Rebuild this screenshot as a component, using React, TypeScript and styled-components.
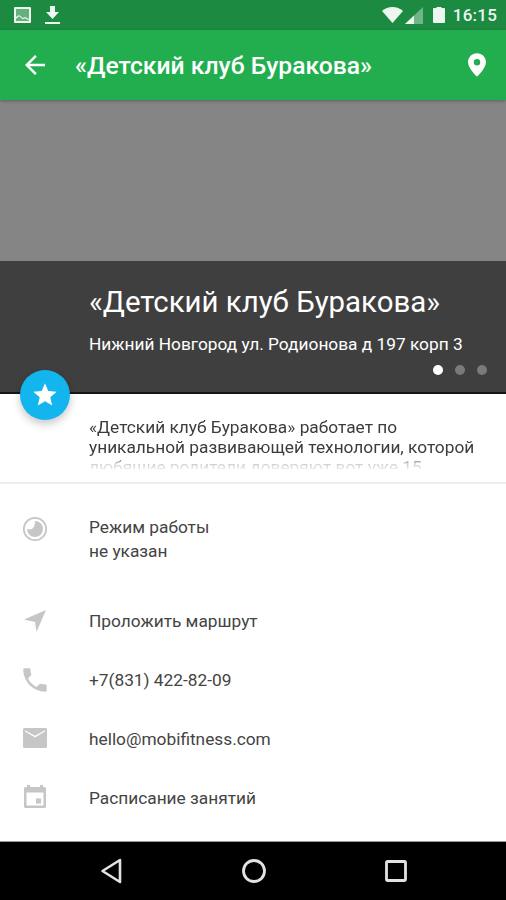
import React from "react";
import styled, { createGlobalStyle } from "styled-components";

const GlobalStyle = createGlobalStyle`
  html, body {
    margin: 0;
    padding: 0;
    background: #fff;
  }
  * {
    box-sizing: border-box;
  }
`;

const Screen = styled.div`
  position: relative;
  display: flex;
  flex-direction: column;
  width: 506px;
  height: 900px;
  overflow: hidden;
  background: #fff;
  font-family: Roboto, "Noto Sans", sans-serif;
  color: #3c3c3c;
`;

const StatusBar = styled.div`
  display: flex;
  align-items: center;
  justify-content: space-between;
  flex: none;
  height: 30px;
  padding: 0 9px 0 14px;
  background: #1c8a41;
  color: #eef6f0;
`;

const StatusGroup = styled.div<{ $gap: number }>`
  display: flex;
  align-items: center;
  gap: ${(p) => p.$gap}px;
`;

const Clock = styled.span`
  font-size: 17px;
  font-weight: 500;
  letter-spacing: 0.2px;
`;

const Toolbar = styled.header`
  display: flex;
  align-items: center;
  flex: none;
  height: 70px;
  padding: 0 20px 0 25px;
  background: #22ae4f;
  color: #fff;
  box-shadow: 0 1px 3px rgba(0, 0, 0, 0.3);
  z-index: 1;
`;

const ToolbarTitle = styled.h1`
  flex: 1;
  margin: 0 0 0 30px;
  font-size: 24.7px;
  font-weight: 500;
  white-space: nowrap;
`;

const Photo = styled.div`
  flex: none;
  height: 161px;
  background: #858585;
`;

const Hero = styled.section`
  position: relative;
  flex: none;
  height: 133px;
  padding: 25px 0 0 89px;
  background: #3f3f3f;
  border-bottom: 2px solid #161616;
  color: #fff;
`;

const HeroTitle = styled.h2`
  margin: 0;
  font-size: 29.4px;
  font-weight: 400;
  line-height: 33px;
  white-space: nowrap;
`;

const HeroAddress = styled.p`
  margin: 15px 0 0;
  font-size: 17.3px;
  line-height: 20px;
  white-space: nowrap;
`;

const Dots = styled.div`
  position: absolute;
  right: 19px;
  top: 104px;
  display: flex;
  align-items: center;
  gap: 12px;
`;

const Dot = styled.span<{ $active?: boolean }>`
  width: 10px;
  height: 10px;
  border-radius: 50%;
  background: ${(p) => (p.$active ? "#fff" : "#7a7a7a")};
`;

const Fab = styled.div`
  position: absolute;
  left: 20px;
  top: 370px;
  display: flex;
  align-items: center;
  justify-content: center;
  width: 50px;
  height: 50px;
  border-radius: 50%;
  background: #12b5ee;
  box-shadow: 0 4px 8px rgba(0, 0, 0, 0.22);
  z-index: 2;
`;

const Description = styled.div`
  flex: none;
  height: 90px;
  padding: 23px 20px 0 89px;
  border-bottom: 2px solid #ececec;
`;

const DescriptionText = styled.p`
  height: 52px;
  margin: 0;
  overflow: hidden;
  font-size: 17.3px;
  line-height: 20px;
  color: #3c3c3c;
  white-space: nowrap;
  -webkit-mask-image: linear-gradient(to bottom, #000 72%, rgba(0, 0, 0, 0.25) 90%, rgba(0, 0, 0, 0.1) 100%);
  mask-image: linear-gradient(to bottom, #000 72%, rgba(0, 0, 0, 0.25) 90%, rgba(0, 0, 0, 0.1) 100%);
`;

const List = styled.ul`
  flex: 1;
  margin: 0;
  padding: 31px 0 0;
  list-style: none;
`;

const Row = styled.li<{ $height: number }>`
  display: flex;
  align-items: flex-start;
  height: ${(p) => p.$height}px;
  padding-left: 22px;
`;

const RowIcon = styled.span<{ $top?: number }>`
  display: flex;
  flex: none;
  width: 26px;
  height: 26px;
  margin-top: ${(p) => p.$top ?? -1}px;
  margin-right: 41px;
  color: #c6c6c6;
`;

const RowText = styled.span`
  font-size: 17.3px;
  line-height: 24px;
  color: #444;
  white-space: pre-line;
`;

const NavBar = styled.nav`
  display: flex;
  align-items: center;
  justify-content: space-between;
  flex: none;
  height: 59px;
  padding: 0 98px 0 99px;
  background: #000;
  border-top: 1px solid #999;
  color: #e2e2e2;
`;

const Star = () => (
  <svg width="28" height="28" viewBox="0 0 24 24" fill="#fff">
    <path d="M12 17.27 18.18 21l-1.64-7.03L22 9.24l-7.19-.61L12 2 9.19 8.63 2 9.24l5.46 4.73L5.82 21z" />
  </svg>
);

const ClockIcon = () => (
  <svg width="26" height="26" viewBox="0 0 26 26">
    <circle cx="13" cy="13" r="11.2" fill="none" stroke="currentColor" strokeWidth="1.8" />
    <path d="M13 5a8 8 0 1 1-8 8c3 1 8 1 8-8z" fill="currentColor" />
  </svg>
);

const App: React.FC = () => (
  <Screen>
    <GlobalStyle />
    <StatusBar>
      <StatusGroup $gap={14}>
        <svg width="17" height="16" viewBox="0 0 17 16" fill="currentColor">
          <rect x="1" y="1" width="15" height="14" opacity="0.35" />
          <path d="M1 0h15a1 1 0 0 1 1 1v14a1 1 0 0 1-1 1H1a1 1 0 0 1-1-1V1a1 1 0 0 1 1-1zm1 2v8l3-2 4 3 2-1 4 2V2zm0 10v2h13v-.8l-4-2-2 1-4-3z" fillRule="evenodd" />
        </svg>
        <svg width="15" height="18" viewBox="0 0 15 18" fill="currentColor">
          <path d="M5 0h5v6h4l-6.500 7L1 6h4zM0 16h15v2H0z" />
        </svg>
      </StatusGroup>
      <StatusGroup $gap={8}>
        <StatusGroup $gap={2}>
          <svg width="21" height="16" viewBox="0 0 21 16" fill="currentColor">
            <path d="M10.500 16 0 4C3 1.500 6.500 0 10.500 0S18 1.500 21 4z" />
          </svg>
          <svg width="18" height="17" viewBox="0 0 18 17">
            <path d="M0 17 18 0v17z" fill="currentColor" opacity="0.4" />
            <path d="M0 17l9-8.500V17z" fill="currentColor" />
          </svg>
        </StatusGroup>
        <svg width="12" height="16" viewBox="0 0 12 16" fill="currentColor" style={{ marginLeft: 2 }}>
          <path d="M3.500 0h5v1H11a1 1 0 0 1 1 1v13a1 1 0 0 1-1 1H1a1 1 0 0 1-1-1V2a1 1 0 0 1 1-1h2.500z" />
        </svg>
        <Clock>16:15</Clock>
      </StatusGroup>
    </StatusBar>

    <Toolbar>
      <svg width="20" height="20" viewBox="0 0 24 24" fill="currentColor">
        <path d="M24 10.500H5.700l8.400-8.400L12 0 0 12l12 12 2.100-2.100-8.400-8.400H24z" />
      </svg>
      <ToolbarTitle>«Детский клуб Буракова»</ToolbarTitle>
      <svg width="18" height="24" viewBox="0 0 20 26" fill="currentColor">
        <path d="M10 0C4.500 0 0 4.400 0 9.800 0 17 10 26 10 26s10-9 10-16.200C20 4.400 15.500 0 10 0zm0 13.500a3.600 3.600 0 1 1 0-7.200 3.600 3.600 0 0 1 0 7.200z" />
      </svg>
    </Toolbar>

    <Photo />

    <Hero>
      <HeroTitle>«Детский клуб Буракова»</HeroTitle>
      <HeroAddress>Нижний Новгород ул. Родионова д 197 корп 3</HeroAddress>
      <Dots>
        <Dot $active />
        <Dot />
        <Dot />
      </Dots>
    </Hero>

    <Fab>
      <Star />
    </Fab>

    <Description>
      <DescriptionText>
        «Детский клуб Буракова» работает по
        <br />
        уникальной развивающей технологии, которой
        <br />
        любящие родители доверяют вот уже 15
      </DescriptionText>
    </Description>

    <List>
      <Row $height={94}>
        <RowIcon $top={1}>
          <ClockIcon />
        </RowIcon>
        <RowText>{"Режим работы\nне указан"}</RowText>
      </Row>
      <Row $height={59}>
        <RowIcon>
          <svg width="26" height="26" viewBox="0 0 26 26" fill="currentColor">
            <path d="M24 2 2 11.500l11 2.500 1.500 10z" />
          </svg>
        </RowIcon>
        <RowText>Проложить маршрут</RowText>
      </Row>
      <Row $height={59}>
        <RowIcon>
          <svg width="26" height="26" viewBox="2 2 20 20" fill="currentColor">
            <path d="M6.620 10.790c1.440 2.830 3.760 5.140 6.590 6.590l2.200-2.200c.27-.27.67-.36 1.020-.24 1.120.37 2.330.57 3.570.57.550 0 1 .45 1 1V20c0 .55-.45 1-1 1C10.610 21 3 13.390 3 4c0-.55.450-1 1-1h3.500c.55 0 1 .45 1 1 0 1.250.2 2.450.57 3.570.11.350.03.740-.25 1.020l-2.200 2.200z" />
          </svg>
        </RowIcon>
        <RowText>+7(831) 422-82-09</RowText>
      </Row>
      <Row $height={59}>
        <RowIcon>
          <svg width="26" height="26" viewBox="0 0 26 26" fill="currentColor">
            <path d="M2.500 2h21A1.500 1.500 0 0 1 25 3.500v17a1.500 1.500 0 0 1-1.500 1.500h-21A1.500 1.500 0 0 1 1 20.500v-17A1.500 1.500 0 0 1 2.500 2zm.500 3.500 10 6 10-6V4.200l-10 5.600L3 4.200z" fillRule="evenodd" />
          </svg>
        </RowIcon>
        <RowText>hello@mobifitness.com</RowText>
      </Row>
      <Row $height={40}>
        <RowIcon>
          <svg width="26" height="26" viewBox="0 0 26 26" fill="currentColor">
            <path d="M5 0h3v2h10V0h3v2h1.500A1.500 1.500 0 0 1 24 3.500v18a1.500 1.500 0 0 1-1.500 1.500h-19A1.500 1.500 0 0 1 2 21.500v-18A1.500 1.500 0 0 1 3.500 2H5zM4.500 7.500v13h17v-13zM14 13.500h5v5h-5z" fillRule="evenodd" />
          </svg>
        </RowIcon>
        <RowText>Расписание занятий</RowText>
      </Row>
    </List>

    <NavBar>
      <svg width="24" height="26" viewBox="0 0 24 26" fill="none" stroke="currentColor" strokeWidth="2.600" strokeLinejoin="round">
        <path d="M21 2 3.500 13 21 24z" />
      </svg>
      <svg width="26" height="26" viewBox="0 0 26 26" fill="none" stroke="currentColor" strokeWidth="2.800">
        <circle cx="13" cy="13" r="10.500" />
      </svg>
      <svg width="24" height="24" viewBox="0 0 24 24" fill="none" stroke="currentColor" strokeWidth="2.800" strokeLinejoin="round">
        <rect x="2.500" y="2.500" width="19" height="19" rx="1" />
      </svg>
    </NavBar>
  </Screen>
);

export default App;
